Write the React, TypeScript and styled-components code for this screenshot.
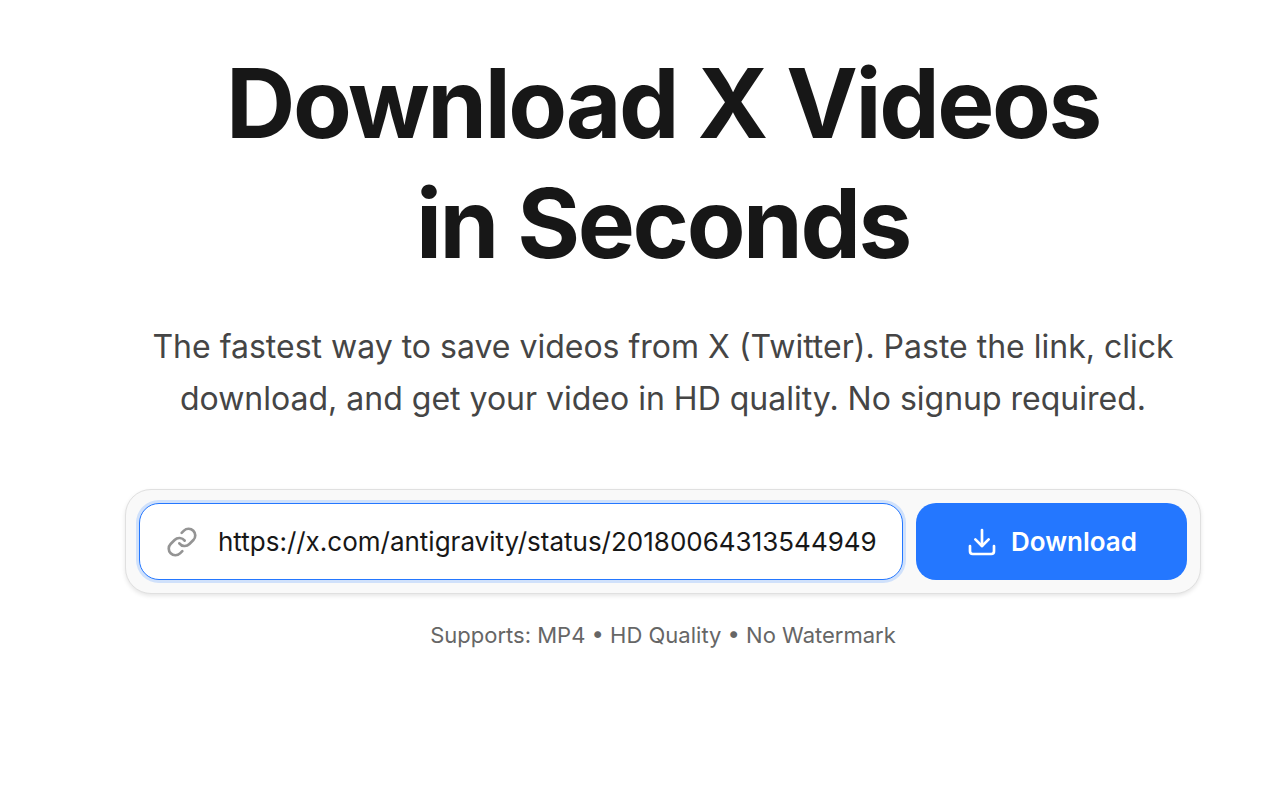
import React, { useState } from "react";
import styled, { createGlobalStyle } from "styled-components";
import { Download, Link } from "lucide-react";

const GlobalStyle = createGlobalStyle`
  *, *::before, *::after { box-sizing: border-box; }
  body {
    margin: 0;
    background: #ffffff;
    color: #171717;
    font-family: Inter, "Liberation Sans", sans-serif;
  }
`;

const Hero = styled.main`
  display: flex;
  flex-direction: column;
  align-items: center;
  max-width: 1076px;
  margin: 0 auto;
  padding: 43px 0 48px;
  position: relative;
  left: 22px;
  text-align: center;
`;

const Title = styled.h1`
  margin: 0;
  font-size: 96px;
  line-height: 120px;
  font-weight: 700;
  letter-spacing: -0.025em;
`;

const Lead = styled.p`
  margin: 38px 0 0;
  font-size: 32px;
  line-height: 52px;
  color: #454545;
`;

const Form = styled.form`
  display: flex;
  gap: 13px;
  width: 100%;
  margin-top: 64px;
  padding: 13px;
  border: 1px solid #e0e0e0;
  border-radius: 26px;
  background: #f9f9f9;
  box-shadow: 0 2px 4px rgba(0, 0, 0, 0.1);
`;

const Field = styled.label`
  display: flex;
  align-items: center;
  flex: 1;
  min-width: 0;
  height: 77px;
  gap: 20px;
  padding: 0 26px;
  border: 1px solid #2477ff;
  border-radius: 20px;
  background: #ffffff;
  color: #949494;
  box-shadow: 0 0 0 3px #d0e1fb;
`;

const UrlInput = styled.input`
  flex: 1;
  min-width: 0;
  padding: 0;
  border: 0;
  outline: 0;
  background: transparent;
  color: #171717;
  font: 400 26px/40px Inter, "Liberation Sans", sans-serif;
`;

const Submit = styled.button`
  display: flex;
  align-items: center;
  justify-content: center;
  gap: 13px;
  width: 271px;
  height: 77px;
  border: 0;
  border-radius: 20px;
  background: #2477ff;
  color: #ffffff;
  font: 600 26px/40px Inter, "Liberation Sans", sans-serif;
  cursor: pointer;
`;

const Note = styled.p`
  margin: 24px 0 0;
  font-size: 22px;
  line-height: 34px;
  color: #666666;
`;

export default function App() {
  const [url, setUrl] = useState("https://x.com/antigravity/status/2018006431354494990");
  return (
    <>
      <GlobalStyle />
      <Hero>
        <Title>Download X Videos<br />in Seconds</Title>
        <Lead>
          The fastest way to save videos from X (Twitter). Paste the link, click
          download, and get your video in HD quality. No signup required.
        </Lead>
        <Form onSubmit={(e) => e.preventDefault()}>
          <Field>
            <Link size={32} strokeWidth={2} aria-hidden />
            <UrlInput aria-label="Video link" type="text" value={url} onChange={(e) => setUrl(e.target.value)} />
          </Field>
          <Submit type="submit">
            <Download size={32} strokeWidth={2} aria-hidden />
            Download
          </Submit>
        </Form>
        <Note>Supports: MP4 • HD Quality • No Watermark</Note>
      </Hero>
    </>
  );
}
